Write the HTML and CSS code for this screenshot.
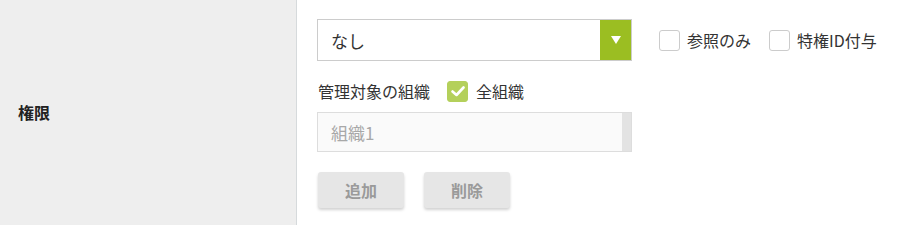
FILE: index.html
```html
<!DOCTYPE html>
<html lang="ja">
<head>
<meta charset="utf-8">
<link rel="stylesheet" href="styles.css">
</head>
<body>
<div class="row">
  <div class="head">権限</div>
  <div class="body">
    <div class="line1">
      <div class="select">
        <span class="select-text">なし</span>
        <span class="select-btn"><svg width="10" height="8" viewBox="0 0 10 8"><path d="M0 0H10L5 8Z" fill="#fff"/></svg></span>
      </div>
      <label class="cb"><span class="box"></span><span>参照のみ</span></label>
      <label class="cb"><span class="box"></span><span>特権ID付与</span></label>
    </div>
    <div class="line2">
      <span class="lbl">管理対象の組織</span>
      <label class="cb"><span class="box checked"><svg width="14" height="11" viewBox="0 0 14 11"><path d="M1.5 5.5L5.5 9L12.5 1.5" fill="none" stroke="#fff" stroke-width="2.6" stroke-linecap="round" stroke-linejoin="round"/></svg></span><span>全組織</span></label>
    </div>
    <div class="list">
      <span class="list-text">組織1</span>
      <span class="list-bar"></span>
    </div>
    <div class="buttons">
      <button class="btn">追加</button>
      <button class="btn">削除</button>
    </div>
  </div>
</div>
</body>
</html>
```
FILE: styles.css
```css
html, body {
  margin: 0;
  padding: 0;
  background: #fff;
}
body {
  font-family: "Noto Sans CJK JP", "Noto Sans", sans-serif;
  color: #333;
  font-size: 16px;
}
.row {
  display: flex;
  height: 225px;
}
.head {
  width: 297px;
  box-sizing: border-box;
  background: #eeeeee;
  border-right: 1px solid #d6dadc;
  display: flex;
  align-items: center;
  padding-left: 18px;
  padding-bottom: 1px;
  font-weight: bold;
  font-size: 16px;
  color: #222;
  flex: none;
}
.body {
  padding: 19px 0 0 20px;
  display: flex;
  flex-direction: column;
}
.line1 {
  display: flex;
  align-items: center;
  height: 42px;
}
.select {
  width: 315px;
  height: 42px;
  box-sizing: border-box;
  border: 1px solid #cccccc;
  display: flex;
  align-items: stretch;
  margin-right: 27px;
}
.select-text {
  flex: 1;
  display: flex;
  align-items: center;
  padding-left: 13px;
  font-size: 17px;
  color: #333;
}
.select-btn {
  width: 31px;
  background: #9bbe22;
  display: flex;
  align-items: center;
  justify-content: center;
}
.cb {
  display: flex;
  align-items: center;
  gap: 7px;
  margin-right: 18px;
  font-size: 16px;
  color: #333;
}
.box {
  width: 21px;
  height: 21px;
  box-sizing: border-box;
  border: 1px solid #cccccc;
  border-radius: 3px;
  background: #fff;
  display: flex;
  align-items: center;
  justify-content: center;
}
.box.checked {
  background: #b4d05b;
  border-color: #b4d05b;
}
.line2 {
  display: flex;
  align-items: center;
  height: 22px;
  margin-top: 19px;
}
.lbl {
  font-size: 16px;
  margin-right: 17px;
  margin-left: 1px;
}
.line2 .cb {
  gap: 8px;
}
.list {
  margin-top: 10px;
  width: 315px;
  height: 40px;
  box-sizing: border-box;
  border: 1px solid #dddddd;
  background: #fafafa;
  display: flex;
}
.list-text {
  flex: 1;
  display: flex;
  align-items: center;
  padding-left: 13px;
  color: #a8a8a8;
  font-size: 17px;
}
.list-bar {
  width: 9px;
  background: #e3e3e3;
}
.buttons {
  display: flex;
  gap: 20px;
  margin-top: 20px;
  padding-left: 1px;
}
.btn {
  width: 86px;
  height: 36px;
  border: none;
  border-radius: 3px;
  background: #e6e6e6;
  box-shadow: 0 2px 3px rgba(0,0,0,0.18);
  color: #9a9a9a;
  font-family: "Noto Sans CJK JP", sans-serif;
  font-weight: bold;
  font-size: 16px;
  padding: 0;
}
```
